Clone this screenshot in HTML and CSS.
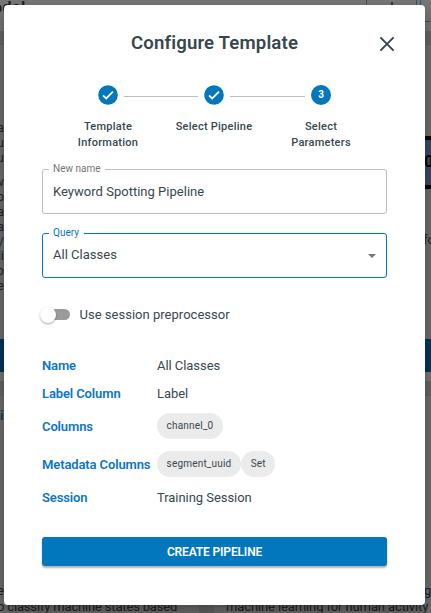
FILE: index.html
```html
<!DOCTYPE html>
<html lang="en">
<head>
<meta charset="utf-8">
<title>Configure Template</title>
<link rel="stylesheet" href="styles.css">
</head>
<body>
<div class="page">
  <header class="page-top"><b>odel</b><span class="ghost-button"><i></i></span><span class="ghost-button next"></span></header>
  <div class="band"></div>
  <div class="cards">
    <div class="card-text"><span>a</span><span>u</span><span class="gap">u</span><span>w</span><span>p</span><span>a</span><span>a</span><span>/</span><span>li</span><span>o</span><span>e</span></div>
    <div class="card-art"><div class="art">0</div><span>fo</span></div>
  </div>
  <div class="action-bar"></div>
  <div class="spacer"></div>
  <div class="band lower"></div>
  <div class="cards bottom">
    <div class="summary"><b>il</b><p>e<br>o classify machine states based</p></div>
    <div class="gutter"></div>
    <div class="summary right"><p><span>g</span><br>machine learning for human activity</p></div>
  </div>
</div>
<main class="dialog">
  <div class="heading"><h1>Configure Template</h1>
    <svg class="close" viewBox="0 0 16 16"><path d="M1.4 1.4 14.6 14.6M14.6 1.4 1.4 14.6"/></svg>
  </div>
  <ol class="stepper">
    <li><svg viewBox="0 0 20 20"><circle cx="10" cy="10" r="9.8"/><path d="m5 10.3 3.2 3.1 6.8-6.8"/></svg><span>Template Information</span></li>
    <li class="line"></li>
    <li><svg viewBox="0 0 20 20"><circle cx="10" cy="10" r="9.8"/><path d="m5 10.3 3.2 3.1 6.8-6.8"/></svg><span class="wide">Select Pipeline</span></li>
    <li class="line"></li>
    <li><b class="number">3</b><span>Select Parameters</span></li>
  </ol>
  <fieldset class="field"><legend>New name</legend><div>Keyword Spotting Pipeline</div></fieldset>
  <fieldset class="field active"><legend>Query</legend><div>All Classes<i class="arrow"></i></div></fieldset>
  <label class="switch"><span class="track"><i></i></span><span class="switch-text">Use session preprocessor</span></label>
  <dl class="details">
    <dt>Name</dt><dd>All Classes</dd>
    <dt>Label Column</dt><dd>Label</dd>
    <dt>Columns</dt><dd><span class="chip">channel_0</span></dd>
    <dt>Metadata Columns</dt><dd><span class="chip">segment_uuid</span><span class="chip">Set</span></dd>
    <dt>Session</dt><dd>Training Session</dd>
  </dl>
  <button>CREATE PIPELINE</button>
</main>
</body>
</html>
```
FILE: styles.css
```css
* { box-sizing: border-box; }
body { margin: 0; height: 613px; overflow: hidden; font-family: Roboto, sans-serif; color: #37474f; }
.page { width: 431px; height: 613px; overflow: hidden; background: #6e6e6e; color: #1b2226; display: flex; flex-direction: column; }
.page-top { height: 31px; flex: none; background: #777; display: flex; overflow: hidden; }
.page-top b { font-size: 16px; line-height: 15px; width: 366px; flex: none; margin-left: -7px; letter-spacing: .4px; }
.ghost-button { width: 51px; height: 22px; flex: none; border: 1px solid #32566b; border-top: 0; margin-left: 7px; display: flex; justify-content: center; }
.ghost-button i { width: 2px; height: 3px; margin-top: 2px; background: #153e57; }
.ghost-button.next { margin-left: 3px; }
.band { height: 14px; flex: none; background: #656565; border-bottom: 1px solid #606060; }
.cards { height: 294px; flex: none; display: flex; justify-content: space-between; }
.card-text { width: 4px; overflow: hidden; display: flex; flex-direction: column; align-items: flex-end; padding-top: 76px; font-size: 13px; line-height: 14.8px; color: #1c2730; }
.card-text .gap { margin-bottom: 10px; }
.card-art { width: 6px; overflow: hidden; padding-top: 91px; font-size: 13px; }
.art { height: 53px; border: solid #000; border-width: 4px 0; background: #3b4966; color: #05070a; font: 700 17px/43px "Liberation Sans"; text-indent: -1px; margin-bottom: 43px; }
.card-art span { margin-left: -2px; }
.action-bar { height: 33px; flex: none; background: #00375c; }
.spacer { height: 9px; flex: none; background: #777; }
.lower { height: 15px; }
.cards.bottom { height: 217px; }
.summary { width: 199px; overflow: hidden; font-size: 13px; line-height: 16px; white-space: nowrap; padding-top: 12px; letter-spacing: -.17px; }
.summary b { display: block; height: 20px; color: #183c52; }
.summary p { margin: 155px 0 0 -3px; }
.gutter { width: 15px; background: #646464; }
.summary.right { width: 217px; padding-top: 32px; letter-spacing: -.12px; }
.summary.right p { margin-left: 12px; }
.summary.right span { margin-left: 198px; }
.dialog { position: absolute; left: 4px; top: 5px; width: 421px; height: 600px; padding: 24px 38px 0; background: #fff; border-radius: 4px; box-shadow: 0 6px 14px rgba(0,0,0,.35); }
.heading { height: 28px; display: flex; align-items: center; justify-content: center; }
h1 { margin: 0; font-size: 18.6px; line-height: 28px; font-weight: 600; letter-spacing: .15px; }
.close { position: absolute; width: 16px; height: 16px; left: 375px; top: 31px; fill: none; stroke: #37474f; stroke-width: 2; }
.stepper { list-style: none; margin: 28px 15px 0; padding: 0; height: 78px; display: flex; justify-content: center; }
.stepper li { width: 20px; flex: none; display: flex; flex-direction: column; align-items: center; }
.stepper svg { width: 20px; height: 20px; flex: none; }
.stepper circle { fill: #0277bd; }
.stepper path { fill: none; stroke: #fff; stroke-width: 1.8; }
.stepper span { margin-top: 14px; width: 80px; text-align: center; font-size: 11px; line-height: 16px; font-weight: 500; letter-spacing: .25px; }
.stepper .wide { width: 100px; white-space: nowrap; }
.stepper .line { width: 74px; margin: 11px 6px 0; border-top: 1px solid #bdbdbd; height: 0; }
.stepper .line:nth-child(4) { width: 75px; }
.number { width: 20px; height: 20px; flex: none; border-radius: 50%; background: #0277bd; color: #fff; font-size: 10px; line-height: 20px; text-align: center; }
.field { min-width: 0; height: 51px; margin: 0 0 13px; padding: 0 10px; border: 1px solid #bdbdbd; border-radius: 3px; font-size: 13px; letter-spacing: .02px; }
.field legend { margin-left: -4px; padding: 0 5px 0 4px; font-size: 10px; line-height: 12px; height: 12px; color: #757575; letter-spacing: 0; }
.field div { line-height: 16px; padding-top: 9px; display: flex; justify-content: space-between; }
.field.active { border-color: #0277bd; }
.active legend { color: #0277bd; }
.active div { padding-top: 8px; }
.arrow { width: 0; height: 0; margin-top: 7px; border: 4px solid transparent; border-top-color: #757575; border-bottom: 0; }
.switch { height: 16px; margin-top: 28px; display: flex; align-items: center; font-size: 13px; letter-spacing: .02px; }
.track { width: 25px; height: 11px; margin-left: 3px; border-radius: 6px; background: #9a9a9a; position: relative; }
.track i { position: absolute; left: -5px; top: -2px; width: 16px; height: 16px; border-radius: 50%; background: #fff; box-shadow: 0 1px 2px rgba(0,0,0,.35); }
.switch-text { margin-left: 9.5px; }
.details { margin: 29px 0 26px; display: grid; grid-template-columns: 115px 1fr; grid-template-rows: 28px 28px 38px 38px 28px; align-items: center; font-size: 13px; letter-spacing: -.05px; }
dt { color: #0b75c9; font-weight: 600; letter-spacing: -.12px; white-space: nowrap; }
dd { margin: 0; display: flex; }
.chip { height: 26px; padding: 0 9.6px; border-radius: 13px; background: #ebebeb; font-size: 10px; line-height: 26px; letter-spacing: .19px; }
button { width: 345px; height: 29px; border: 0; border-radius: 3px; background: #0277bd; color: #fff; font: 600 12px Roboto; letter-spacing: -.15px; box-shadow: 0 2px 2px rgba(0,0,0,.3); }
```
